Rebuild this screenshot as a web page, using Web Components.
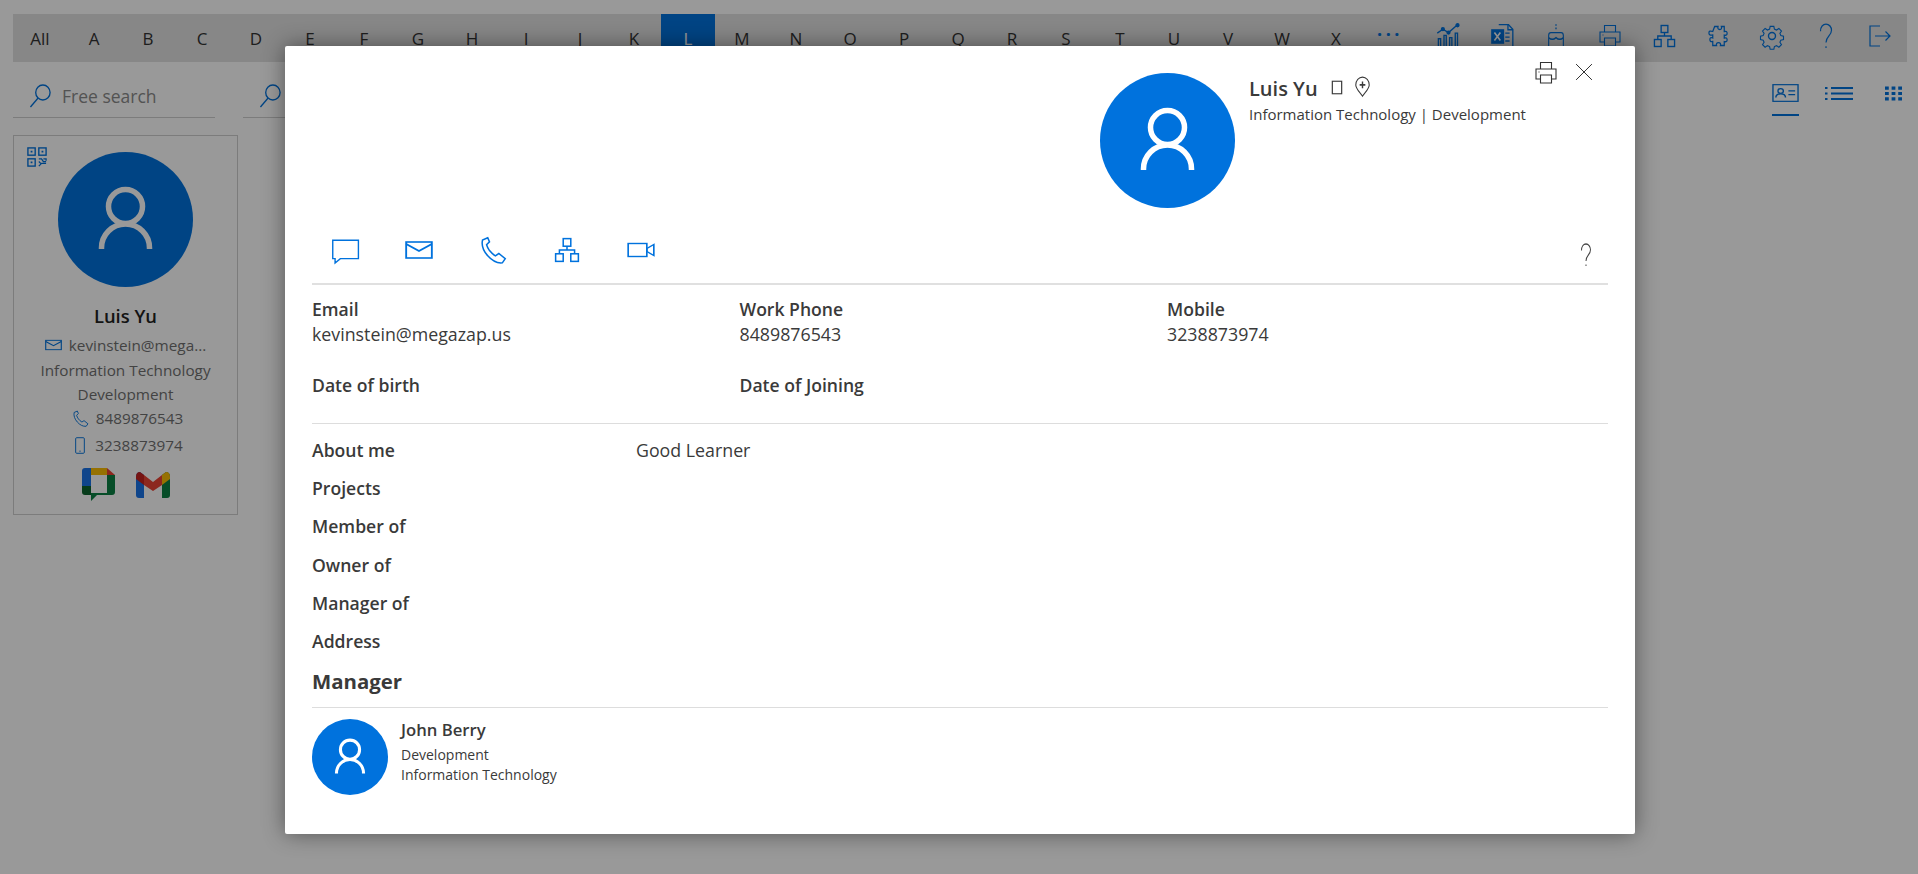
<!DOCTYPE html>
<html>
<head>
<meta charset="utf-8">
<title>Directory</title>
<style>
  html, body { margin: 0; height: 100%; overflow: hidden; background: #fff; }
  body { font-family: "Open Sans", "Noto Sans", sans-serif; color: #333; }
</style>
</head>
<body>
<x-directory></x-directory>

<script>
// icon paths, all drawn on a 24 box unless viewBox says otherwise
const ICONS = {
  search: '<circle cx="14.500" cy="8.500" r="7.500"/><path d="M9.500 14 1.500 23"/>',
  chart: '<path d="M3 21v-7h2v7M8 21v-10h2v10M13 21v-8h2v8M18 21V9h2v12" stroke-width="1.2"/><path d="m2 9 5-3.500 5 3 8-7" stroke-width="1.2"/><circle cx="7" cy="5.500" r="1.200" fill="currentColor"/><circle cx="12" cy="8.500" r="1.200" fill="currentColor"/><circle cx="20" cy="2" r="1.200" fill="currentColor"/>',
  excel: '<path d="M9 1.500h9l4 4v17H9" stroke-width="1.200"/><path d="M17.500 1.500v4.500h4.500M15 9h4M15 12.500h4M15 16h4" stroke-width="1.200"/><rect x="2" y="5.500" width="12" height="13" fill="currentColor" stroke="none"/><path d="m5 8.500 5.500 7M10.500 8.500 5 15.500" stroke="#fff" stroke-width="1.500"/>',
  cake: '<path d="M12 1v5" stroke-dasharray="1.500 1.500"/><path d="M4 22V11q0-2.500 2.500-2.500h11Q20 8.500 20 11v11zM4 13q4 3 8 0 4 3 8 0M2 22h20" stroke-width="1.200"/>',
  print: '<path d="M6.500 8V1.500h11V8M6.500 18H2V8h20v10h-4.500M6.500 14h11v8h-11z" stroke-width="1.100"/><path d="M4.500 11h1" stroke-width="1.100"/>',
  org: '<rect x="8.500" y="1.500" width="7" height="7"/><rect x="1.500" y="15.500" width="7" height="7"/><rect x="15.500" y="15.500" width="7" height="7"/><path d="M12 8.500v3.500M5 15.500V12h14v3.500"/>',
  puzzle: '<path d="M9 2.500h3.500q-.8 3 1.800 3t1.700-3H19v5q3-.8 3 1.800t-3 1.700v3q3-.8 3 1.800T19 17.500v4h-4q.8-2.800-2-2.800T11 21.500H7v-4q-3 .8-3-2t3-1.500v-3Q3 11.800 3 9t4-1.500z" transform="translate(-1 0)" stroke-width="1.300"/>',
  gear: '<circle cx="12" cy="12" r="3.500"/><path d="M10 1.500h4l.6 3 2.300 1 2.600-1.700 2.800 2.800-1.700 2.600 1 2.300 2.900.6v3.800l-2.900.6-1 2.300 1.700 2.600-2.800 2.800-2.600-1.700-2.300 1-.6 2.900h-4l-.6-2.900-2.300-1-2.600 1.700-2.800-2.800 1.700-2.600-1-2.300-2.900-.6v-3.800l2.900-.6 1-2.300-1.700-2.600 2.800-2.800 2.600 1.700 2.300-1z" transform="translate(12 12) scale(.92) translate(-12 -12)" stroke-width="1.200"/>',
  help: '<path d="M6 7.500C6 3.500 8.700 1 12 1s6 2.500 6 5.800c0 5.200-6 5.400-6 11.200" stroke-width="1.300"/><path d="M12 21.500v1.500" stroke-width="1.300"/>',
  logout: '<path d="M12 2H2v20h10" stroke-width="1.200"/><path d="M7 12h15M17.500 7.500 22 12l-4.500 4.500" stroke-width="1.200"/>',
  cardview: '<rect x="1" y="2" width="26" height="20"/><circle cx="9" cy="9.500" r="2.800"/><path d="M4 17.500q0-4.500 5-4.500t5 4.500M17 9.500h7M17 14h7" stroke-width="1.500"/>',
  listview: '<path d="M6 3.500h22M6 10h22M6 16.500h22" stroke-width="2.200"/><path d="M0 3.500h2.500M0 10h2.500M0 16.500h2.500" stroke-width="2.200"/>',
  gridview: '<path d="M0 2h4v4H0zM7 2h4v4H7zM14 2h4v4h-4zM0 9h4v4H0zM7 9h4v4H7zM14 9h4v4h-4zM0 16h4v4H0zM7 16h4v4H7zM14 16h4v4h-4z" fill="currentColor" stroke="none"/>',
  qr: '<rect x="1" y="1" width="8" height="8" stroke-width="1.500"/><rect x="13" y="1" width="8" height="8" stroke-width="1.500"/><rect x="1" y="13" width="8" height="8" stroke-width="1.500"/><path d="M4 4h2v2H4zM16 4h2v2h-2zM4 16h2v2H4z" fill="currentColor" stroke="none"/><path d="M13 13h3l2 3h3M13 21l3-3h5M13 16l2 2M18 13h3v2" stroke-width="1.400"/>',
  mail: '<rect x="1" y="4" width="22" height="16" stroke-width="1.600"/><path d="m1 6 11 7 11-7" stroke-width="1.600"/>',
  phone: '<path d="M7.500 1.500 3 3.500C2 8 4 13 7.500 17s8 6.500 12.500 6l2.500-3.500-5.500-4.500-3 2c-2-1-3.500-2.700-5-4.500-1.200-1.600-2-3.300-2.500-5l2.500-2.500z" stroke-width="1.300"/>',
  mobile: '<rect x="5.500" y="1" width="13" height="22" rx="1.500"/><path d="M11 20h2"/>',
  chat: '<path d="M1.500 3h22v17H8l-4.500 4v-4h-2z" stroke-width="1.200"/>',
  video: '<rect x="1" y="5.500" width="16" height="13"/><path d="m17 10.500 6-4v11l-6-4z"/>',
  close: '<path d="m2.500 2.500 19 19M21.500 2.500l-19 19" stroke-width="1.200"/>',
  pin: '<path d="M12 23C7 17 2.500 13.500 2.500 9.500a9.500 9.500 0 0 1 19 0C21.500 13.500 17 17 12 23z" stroke-width="1.500"/><path d="M12 5.500v8M8 9.500h8" stroke-width="2"/>',
  tofu: '<rect x="5" y="2" width="14" height="20" stroke-width="1.800"/>'
};

class XIcon extends HTMLElement {
  connectedCallback() {
    if (this.shadowRoot) return;
    let shadow = this.attachShadow({mode: 'open'});
    let w = this.getAttribute('w') || 24;
    let h = this.getAttribute('h') || 24;
    let box = this.getAttribute('box') || '0 0 24 24';
    shadow.innerHTML = `
      <style>
        :host { display: inline-flex; flex: none; line-height: 0; }
        svg { fill: none; stroke: currentColor; stroke-width: 1.4; overflow: visible; }
      </style>
      <svg width="${w}" height="${h}" viewBox="${box}" preserveAspectRatio="none">${ICONS[this.getAttribute('name')]}</svg>`;
  }
}

class XAvatar extends HTMLElement {
  connectedCallback() {
    if (this.shadowRoot) return;
    let size = this.getAttribute('size') || 135;
    this.attachShadow({mode: 'open'}).innerHTML = `
      <style>
        :host { display: block; flex: none; width: ${size}px; height: ${size}px; border-radius: 50%; background: #0072dd; }
        svg { display: block; fill: none; stroke: #fff; stroke-width: 5.500; }
      </style>
      <svg width="${size}" height="${size}" viewBox="0 0 135 135">
        <circle cx="67.500" cy="54.500" r="17"/>
        <path d="M43.500 97v-1a24 24 0 0 1 48 0v1"/>
      </svg>`;
  }
}

class XAlphaBar extends HTMLElement {
  constructor() {
    super();
    let letters = ['All', ...'ABCDEFGHIJKLMNOPQRSTUVWX'];
    let cells = letters.map(c => `<span class="cell ${c === 'L' ? 'on' : ''}">${c}</span>`).join('');
    let tools = [['chart', 27, 27], ['excel', 26, 27], ['cake', 22, 27], ['print', 24, 24], ['org', 23, 24], ['puzzle', 23, 24], ['gear', 24, 24], ['help', 22, 26], ['logout', 24, 24]];
    this.attachShadow({mode: 'open'}).innerHTML = `
      <style>
        :host { display: flex; height: 48px; margin: 14px 11px 0 13px; background: #e1e1e1; color: #333; font-size: 17px; }
        .cell { width: 54px; flex: none; display: flex; align-items: center; justify-content: center; }
        .on { background: #0072dd; color: #fff; }
        .blue { color: #0072dd; }
        .cell x-icon { margin-bottom: 4px; }
        .dots { font-size: 18px; letter-spacing: 3.500px; color: #0072dd; padding-bottom: 8px; box-sizing: border-box; font-weight: 700; margin-right: 4px; }
      </style>
      ${cells}
      <span class="cell dots">···</span>
      ${tools.map(t => `<span class="cell blue"><x-icon name="${t[0]}" w="${t[1]}" h="${t[2]}"></x-icon></span>`).join('')}`;
  }
}

class XSearch extends HTMLElement {
  constructor() {
    super();
    this.attachShadow({mode: 'open'}).innerHTML = `
      <style>
        :host { display: flex; align-items: center; gap: 10px; height: 42px; padding: 0 0 2px 16px; box-sizing: border-box; border-bottom: 1px solid #cfcfcf; color: #8a8a8a; font-size: 17.500px; width: 202px; }
        x-icon { color: #0072dd; }
      </style>
      <x-icon name="search" w="23" h="24"></x-icon><slot></slot>`;
  }
}

class XViewSwitch extends HTMLElement {
  constructor() {
    super();
    this.attachShadow({mode: 'open'}).innerHTML = `
      <style>
        :host { display: flex; color: #0072dd; margin-left: auto; }
        div { display: flex; justify-content: center; height: 40px; padding-top: 7px; box-sizing: border-box; }
        .a { width: 27px; border-bottom: 2px solid #0072dd; margin-right: 26px; }
        .b { width: 28px; margin-right: 32px; padding-top: 9px; }
        .c { width: 17px; margin-right: 16px; padding-top: 9px; }
      </style>
      <div class="a"><x-icon name="cardview" w="27" h="20" box="0 0 28 24"></x-icon></div>
      <div class="b"><x-icon name="listview" w="28" h="17" box="0 0 28 20"></x-icon></div>
      <div class="c"><x-icon name="gridview" w="17" h="17" box="0 0 18 22"></x-icon></div>`;
  }
}

class XPersonCard extends HTMLElement {
  constructor() {
    super();
    this.attachShadow({mode: 'open'}).innerHTML = `
      <style>
        :host { display: block; position: relative; width: 225px; height: 380px; box-sizing: border-box; border: 1px solid #cfcfcf; text-align: center; color: #707070; font-size: 15.300px; }
        .qr { position: absolute; left: 13px; top: 11px; color: #0072dd; }
        x-avatar { margin: 16px auto 0; }
        h3 { margin: 16px 0 0; height: 26px; line-height: 26px; font-size: 18.400px; font-weight: 600; color: #222; }
        .row { height: 24px; line-height: 24px; display: flex; justify-content: center; align-items: center; gap: 7px; white-space: nowrap; }
        .row x-icon { color: #0072dd; }
        .tel { padding-left: 4px; }
        .apps { display: flex; justify-content: center; align-items: center; gap: 20px; margin-top: 11px; }
      </style>
      <x-icon class="qr" name="qr" w="20" h="20" box="0 0 22 22"></x-icon>
      <x-avatar size="135"></x-avatar>
      <h3>Luis Yu</h3>
      <div class="row" style="margin-top:4px"><x-icon name="mail" w="17" h="14"></x-icon>kevinstein@mega...</div>
      <div class="row" style="margin-top:1px">Information Technology</div>
      <div class="row">Development</div>
      <div class="row tel"><x-icon name="phone" w="17" h="17"></x-icon>8489876543</div>
      <div class="row tel" style="margin-top:3px"><x-icon name="mobile" w="16" h="17"></x-icon>3238873974</div>
      <div class="apps">
        <svg width="34" height="34" viewBox="0 0 34 34">
          <path d="M0 3q0-3 3-3h6v18H0z" fill="#1a73e8"/>
          <path d="M9 0h16v7H9z" fill="#fbbc04"/>
          <path d="m25 0 8 7h-8z" fill="#ea4335"/>
          <path d="M25 7h8v17q0 3-3 3H15l-6 6v-8h16z" fill="#0b8043"/>
          <path d="M0 18h9v9H3q-3 0-3-3z" fill="#0d652d"/>
        </svg>
        <svg width="34" height="26" viewBox="0 0 34 26">
          <path d="M0 5q0-5 4-5l4 3v23H3q-3 0-3-3z" fill="#1a73e8"/>
          <path d="M26 3l4-3q4 0 4 5v18q0 3-3 3h-5z" fill="#0b8043"/>
          <path d="M26 3l4-3q4 0 4 5v2l-8 6z" fill="#fbbc04"/>
          <path d="M8 3 17 10l9-7v10l-9 6-9-6z" fill="#ea4335"/>
          <path d="M0 5q0-5 4-5l4 3v10L0 7z" fill="#c5221f"/>
        </svg>
      </div>`;
  }
}

// one label over one value
class XField extends HTMLElement {
  constructor() {
    super();
    this.attachShadow({mode: 'open'}).innerHTML = `
      <style>
        :host { display: block; line-height: 27px; font-size: 17.800px; height: 76px; white-space: nowrap; }
        b { display: block; font-weight: 600; font-size: 17.600px; line-height: 24px; }
      </style>
      <b>${this.getAttribute('label')}</b><slot></slot>`;
  }
}

// label left, value at a fixed column
class XInfoRow extends HTMLElement {
  constructor() {
    super();
    this.attachShadow({mode: 'open'}).innerHTML = `
      <style>
        :host { display: flex; height: 38.200px; line-height: 28px; font-size: 17.800px; }
        b { width: 324px; flex: none; font-weight: 600; font-size: 17.600px; }
      </style>
      <b>${this.getAttribute('label')}</b><slot></slot>`;
  }
}

class XProfileModal extends HTMLElement {
  constructor() {
    super();
    let actions = ['chat', 'mail', 'phone', 'org', 'video'];
    let sizes = {chat: [28, 26], mail: [28, 24], phone: [28, 28], org: [26, 26], video: [28, 24]};
    this.attachShadow({mode: 'open'}).innerHTML = `
      <style>
        :host { display: block; width: 1350px; height: 788px; box-sizing: border-box; background: #fff; padding: 0 27px; color: #3a3a3a; box-shadow: 0 0 22px rgba(0,0,0,.45); border-radius: 2px; }
        .head { display: flex; padding: 27px 0 0 788px; height: 185px; box-sizing: border-box; }
        .who { margin-left: 14px; flex: 1; }
        .name { display: flex; align-items: center; gap: 11px; height: 30px; font-size: 20px; font-weight: 600; }
        .name x-icon { margin-top: -2px; }
        .name x-icon + x-icon { margin-left: -2px; }
        .sub { font-size: 15px; line-height: 22px; }
        .tools { display: flex; gap: 16px; margin: -12px 14px 0 0; align-self: flex-start; color: #333; }
        .actions { display: flex; align-items: center; height: 52px; color: #0072dd; border-bottom: 2px solid #e0e0e0; }
        .act { width: 74px; display: flex; justify-content: center; margin-top: -14px; }
        .act:first-child { margin-left: -4px; }
        .q { margin-left: auto; margin-right: 13px; margin-top: -4px; color: #444; }
        .grid { display: grid; grid-template-columns: repeat(3, 427.500px); padding-top: 12px; height: 139px; box-sizing: border-box; border-bottom: 1px solid #ddd; }
        .info { padding-top: 12px; }
        h2 { margin: 0; font-size: 20.400px; line-height: 27px; font-weight: 700; height: 43px; box-sizing: border-box; padding-top: 3px; border-bottom: 1px solid #ddd; }
        .mgr { display: flex; margin-top: 11px; }
        .mgr div { margin-left: 13px; font-size: 14px; line-height: 20px; }
        .mgr strong { display: block; font-weight: 600; font-size: 16.700px; line-height: 22px; margin-bottom: 4px; }
      </style>
      <div class="head">
        <x-avatar size="135"></x-avatar>
        <div class="who">
          <div class="name"><span>Luis Yu</span><x-icon name="tofu" w="16" h="15"></x-icon><x-icon name="pin" w="17" h="20"></x-icon></div>
          <div class="sub">Information Technology | Development</div>
        </div>
        <div class="tools"><x-icon name="print" w="24" h="24"></x-icon><x-icon name="close" w="20" h="20" style="margin-top:1px"></x-icon></div>
      </div>
      <div class="actions">
        ${actions.map(a => `<span class="act"><x-icon name="${a}" w="${sizes[a][0]}" h="${sizes[a][1]}"></x-icon></span>`).join('')}
        <x-icon class="q" name="help" w="18" h="24"></x-icon>
      </div>
      <div class="grid">
        <x-field label="Email">kevinstein@megazap.us</x-field>
        <x-field label="Work Phone">8489876543</x-field>
        <x-field label="Mobile">3238873974</x-field>
        <x-field label="Date of birth"></x-field>
        <x-field label="Date of Joining"></x-field>
      </div>
      <div class="info">
        <x-info-row label="About me">Good Learner</x-info-row>
        <x-info-row label="Projects"></x-info-row>
        <x-info-row label="Member of"></x-info-row>
        <x-info-row label="Owner of"></x-info-row>
        <x-info-row label="Manager of"></x-info-row>
        <x-info-row label="Address"></x-info-row>
      </div>
      <h2>Manager</h2>
      <div class="mgr">
        <x-avatar size="76"></x-avatar>
        <div><strong>John Berry</strong>Development<br>Information Technology</div>
      </div>`;
  }
}

class XDirectory extends HTMLElement {
  constructor() {
    super();
    this.attachShadow({mode: 'open'}).innerHTML = `
      <style>
        :host { display: block; height: 874px; position: relative; overflow: hidden; }
        .tools { display: flex; gap: 28px; margin: 14px 0 0 13px; height: 42px; }
        x-person-card { margin: 17px 0 0 13px; }
        .overlay { position: absolute; inset: 0; background: rgba(0,0,0,.4); display: flex; justify-content: center; padding: 46px 0 0 2px; box-sizing: border-box; }
      </style>
      <x-alpha-bar></x-alpha-bar>
      <div class="tools">
        <x-search>Free search</x-search>
        <x-search></x-search>
        <x-view-switch></x-view-switch>
      </div>
      <x-person-card></x-person-card>
      <div class="overlay"><x-profile-modal></x-profile-modal></div>`;
  }
}

customElements.define('x-icon', XIcon);
customElements.define('x-avatar', XAvatar);
customElements.define('x-alpha-bar', XAlphaBar);
customElements.define('x-search', XSearch);
customElements.define('x-view-switch', XViewSwitch);
customElements.define('x-person-card', XPersonCard);
customElements.define('x-field', XField);
customElements.define('x-info-row', XInfoRow);
customElements.define('x-profile-modal', XProfileModal);
customElements.define('x-directory', XDirectory);
</script>
</body>
</html>
